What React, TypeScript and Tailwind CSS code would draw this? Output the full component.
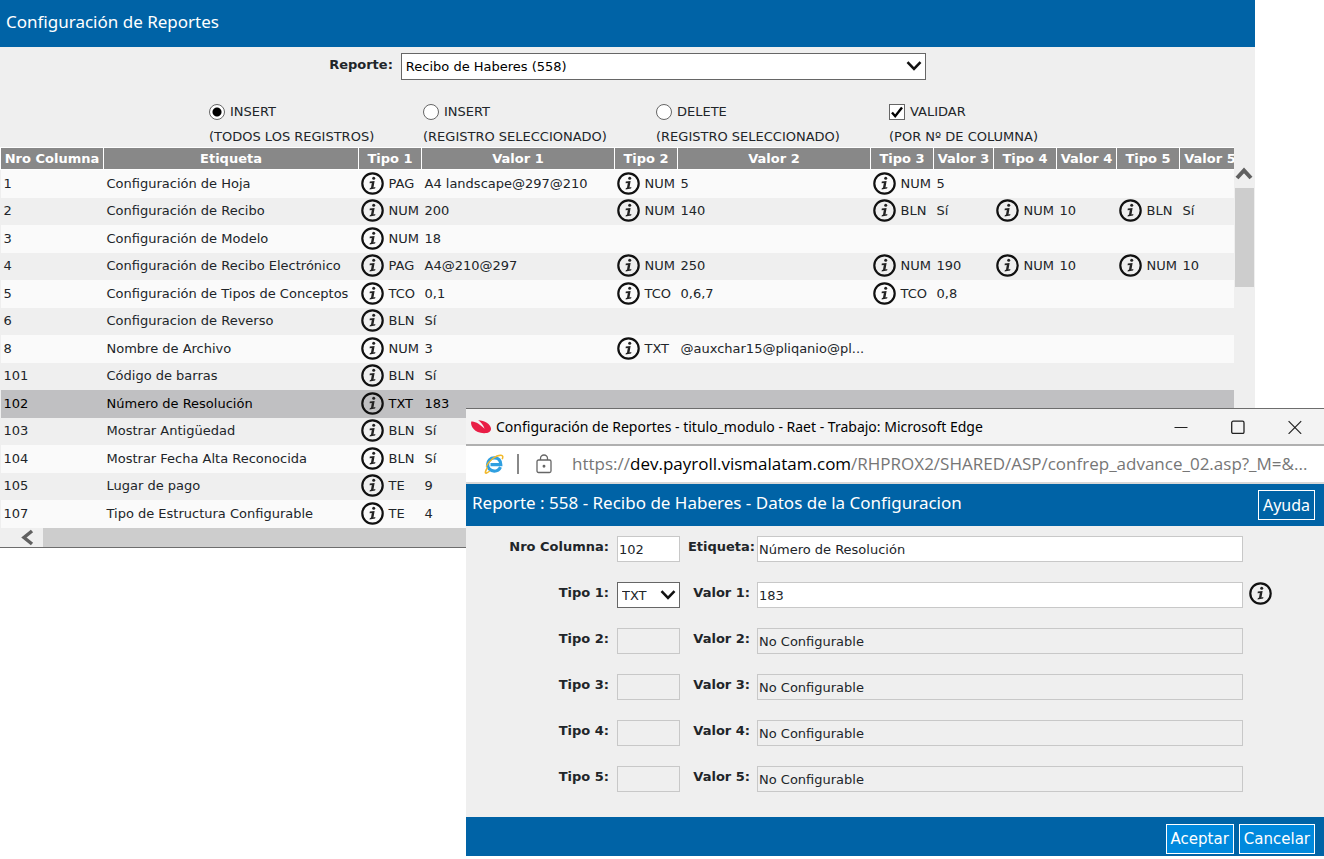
import { useState } from "react";

type Field = [tipo: string, valor: string];

type Row = {
  nro: number;
  etiqueta: string;
  fields: Field[];
};

const rows: Row[] = [
  {
    nro: 1,
    etiqueta: "Configuración de Hoja",
    fields: [["PAG", "A4 landscape@297@210"], ["NUM", "5"], ["NUM", "5"]],
  },
  {
    nro: 2,
    etiqueta: "Configuración de Recibo",
    fields: [["NUM", "200"], ["NUM", "140"], ["BLN", "Sí"], ["NUM", "10"], ["BLN", "Sí"]],
  },
  { nro: 3, etiqueta: "Configuración de Modelo", fields: [["NUM", "18"]] },
  {
    nro: 4,
    etiqueta: "Configuración de Recibo Electrónico",
    fields: [["PAG", "A4@210@297"], ["NUM", "250"], ["NUM", "190"], ["NUM", "10"], ["NUM", "10"]],
  },
  {
    nro: 5,
    etiqueta: "Configuración de Tipos de Conceptos",
    fields: [["TCO", "0,1"], ["TCO", "0,6,7"], ["TCO", "0,8"]],
  },
  { nro: 6, etiqueta: "Configuracion de Reverso", fields: [["BLN", "Sí"]] },
  {
    nro: 8,
    etiqueta: "Nombre de Archivo",
    fields: [["NUM", "3"], ["TXT", "@auxchar15@pliqanio@pl..."]],
  },
  { nro: 101, etiqueta: "Código de barras", fields: [["BLN", "Sí"]] },
  { nro: 102, etiqueta: "Número de Resolución", fields: [["TXT", "183"]] },
  { nro: 103, etiqueta: "Mostrar Antigüedad", fields: [["BLN", "Sí"]] },
  { nro: 104, etiqueta: "Mostrar Fecha Alta Reconocida", fields: [["BLN", "Sí"]] },
  { nro: 105, etiqueta: "Lugar de pago", fields: [["TE", "9"]] },
  { nro: 107, etiqueta: "Tipo de Estructura Configurable", fields: [["TE", "4"]] },
];

const modes = [
  { id: "all", title: "INSERT", note: "(TODOS LOS REGISTROS)" },
  { id: "insert", title: "INSERT", note: "(REGISTRO SELECCIONADO)" },
  { id: "delete", title: "DELETE", note: "(REGISTRO SELECCIONADO)" },
];

const InfoIcon = () => (
  <svg viewBox="0 0 24 24" className="size-6 shrink-0">
    <circle cx="11.500" cy="11.500" r="10.200" fill="none" stroke="#111" strokeWidth="2.200" />
    <circle cx="12.700" cy="6.300" r="1.500" fill="#222" />
    <path d="M8.800 9.500 13.600 9 12.500 15.500l1.900-.4-.3 1.500-5.500.9.300-1.500 1.100-.3.800-4.600-2.200.2z" fill="#222" />
  </svg>
);

const Chevron = () => (
  <svg
    viewBox="0 0 16 10"
    className="pointer-events-none absolute top-2 right-1 h-[10px] w-4"
  >
    <path d="M1.500 1.200 8 7.800l6.500-6.600" fill="none" stroke="#111" strokeWidth="2.600" />
  </svg>
);

const ReportTable = () => (
  <table className="w-[1240px] table-fixed border-collapse">
    <colgroup>
      <col className="w-[103px]" />
      <col className="w-[255px]" />
      <col className="w-[63px]" />
      <col className="w-[193px]" />
      <col className="w-[63px]" />
      <col className="w-[193px]" />
      <col className="w-[63px]" />
      <col className="w-[60px]" />
      <col className="w-[63px]" />
      <col className="w-[60px]" />
      <col className="w-[63px]" />
      <col className="w-[61px]" />
    </colgroup>
    <thead>
      <tr className="h-[22px] whitespace-nowrap text-white">
        <th className="border border-white bg-[#888] p-0">Nro Columna</th>
        <th className="border border-white bg-[#888] p-0">Etiqueta</th>
        {[1, 2, 3, 4, 5].map((n) => [
          <th key={`t${n}`} className="border border-white bg-[#888] p-0">
            Tipo {n}
          </th>,
          <th key={`v${n}`} className="border border-white bg-[#888] p-0">
            Valor {n}
          </th>,
        ])}
      </tr>
    </thead>
    <tbody>
      {rows.map((row) => (
        <tr
          key={row.nro}
          className={`whitespace-nowrap odd:h-7 even:h-[27px] ${
            row.nro === 102
              ? "bg-[#c0c0c2] text-black"
              : "odd:bg-[#fafafa] even:bg-[#efefef]"
          }`}
        >
          <td className="p-0 pl-[3px]">{row.nro}</td>
          <td className="p-0 pl-[3px]">{row.etiqueta}</td>
          {[0, 1, 2, 3, 4].map((i) => {
            const field = row.fields[i];
            return [
              <td key={`t${i}`} className="p-0 pl-[2px]">
                {field && (
                  <div className="flex items-center gap-1">
                    <InfoIcon />
                    {field[0]}
                  </div>
                )}
              </td>,
              <td key={`v${i}`} className="p-0 pl-[3px]">
                {field && field[1]}
              </td>,
            ];
          })}
        </tr>
      ))}
    </tbody>
  </table>
);

const TitleBar = () => (
  <div className="flex h-9 items-center border-t border-[#6d6d6d] bg-[#f3f3f3] pl-1">
    <svg viewBox="0 0 22 16" className="mr-1 h-4 w-[22px]">
      <path
        d="M1.200 2.600C.2 7.500 4.500 14 14 14.200c4.500.1 7.200-1.700 7-4.700C20.700 5.300 14.500 1.200 8.200 1.200c2.500 1.400 5.200 4.800 6.400 8.500C10.800 5.800 4.500 1.600 1.200 2.600z"
        fill="#e91e46"
      />
    </svg>
    <span className="font-['Noto_Sans',sans-serif] text-sm text-black">
      Configuración de Reportes - titulo_modulo - Raet - Trabajo: Microsoft Edge
    </span>
    <div className="ml-auto flex gap-[43px] pr-[22px] text-[#222]">
      <button aria-label="Minimizar">
        <svg viewBox="0 0 14 14" className="size-[14px]" fill="none" stroke="currentColor">
          <path d="M.5 7.500h13" />
        </svg>
      </button>
      <button aria-label="Maximizar">
        <svg viewBox="0 0 14 14" className="size-[14px]" fill="none" stroke="currentColor">
          <rect x=".7" y="1.200" width="12.300" height="12.300" rx="1.500" strokeWidth="1.300" />
        </svg>
      </button>
      <button aria-label="Cerrar">
        <svg viewBox="0 0 14 14" className="size-[14px]" fill="none" stroke="currentColor">
          <path d="m.6 1.200 12.600 12.600M13.200 1.200.6 13.800" strokeWidth="1.200" />
        </svg>
      </button>
    </div>
  </div>
);

const AddressBar = () => (
  <div className="flex h-10 items-center border-t-2 border-b-2 border-t-[#b0b0b0] border-b-[#d8d8d8] bg-white pl-[18px] whitespace-nowrap">
    <svg viewBox="0 0 20 20" className="size-5" fill="none">
      <path
        d="M16.500 13.200c-1.200 2.600-3.500 4-6.200 4-3.900 0-6.700-3-6.700-6.700s2.800-6.700 6.700-6.700c4 0 6.500 2.700 6.500 6.900H6.500"
        stroke="#2f9fe0"
        strokeWidth="3.200"
      />
      <path
        d="M3.500 13.500C1 17.500.7 19.800 2.500 19c1.500-.6 3.200-2 3.200-2M2.200 12.500C5 6.500 12 1 17 1.200c1.800.1 2.300 1.600 1.200 4"
        stroke="#f2b92c"
        strokeWidth="1.500"
      />
    </svg>
    <span className="ml-[13px] h-5 w-[2px] bg-[#888]" />
    <svg
      viewBox="0 0 16 20"
      className="ml-[17px] h-5 w-4"
      fill="none"
      stroke="#666"
      strokeWidth="1.300"
    >
      <rect x="1" y="6" width="14" height="12.500" rx="1.500" />
      <path d="M4.500 6V4.500a3.500 3.500 0 0 1 7 0V6" />
      <circle cx="8" cy="12.200" r=".8" fill="#666" />
    </svg>
    <span className="ml-5 font-['Open_Sans',sans-serif] text-[17px] text-[#767676]">
      https://<span className="text-black">dev.payroll.vismalatam.com</span>
      /RHPROX2/SHARED/ASP/confrep_advance_02.asp?_M=&amp;...
    </span>
  </div>
);

const inputClass =
  "h-[26px] min-w-0 rounded-none border border-[#c8c8c8] bg-white p-0 pt-px pl-px outline-none disabled:bg-[#efefef]";

const labelClass = "h-[22px] shrink-0 text-right leading-[22px] font-bold";

const Popup = () => (
  <section className="absolute top-[408px] right-0 left-[466px] bg-[#efefef]">
    <TitleBar />
    <AddressBar />
    <div className="flex h-[42px] items-center justify-between bg-[#0063a6] pr-[9px] pl-[6px] text-white">
      <h2 className="pb-1 font-['Noto_Sans',sans-serif] text-[17px]">
        Reporte : 558 - Recibo de Haberes - Datos de la Configuracion
      </h2>
      <button className="h-[30px] border border-white px-1 font-['Noto_Sans',sans-serif] text-base">
        Ayuda
      </button>
    </div>
    <form className="flex h-[291px] flex-col gap-5 pt-[10px] pr-[51px]">
      <div className="flex">
        <label htmlFor="nro" className={`${labelClass} mr-2 w-[143px]`}>
          Nro Columna:
        </label>
        <input
          id="nro"
          className={`${inputClass} w-[63px]`}
          defaultValue="102"
        />
        <label htmlFor="etiqueta" className={`${labelClass} mr-[2px] w-[75px]`}>
          Etiqueta:
        </label>
        <input
          id="etiqueta"
          className={`${inputClass} mr-[30px] flex-1`}
          defaultValue="Número de Resolución"
        />
      </div>
      {[1, 2, 3, 4, 5].map((n) => (
        <div key={n} className="flex">
          <label htmlFor={`tipo${n}`} className={`${labelClass} mr-2 w-[143px]`}>
            Tipo {n}:
          </label>
          {n === 1 ? (
            <div className="relative h-[26px] w-[63px]">
              <select
                id="tipo1"
                className="h-full w-full appearance-none border border-[#666] bg-white pt-px pl-1"
              >
                <option>TXT</option>
              </select>
              <Chevron />
            </div>
          ) : (
            <input id={`tipo${n}`} className={`${inputClass} w-[63px]`} disabled />
          )}
          <label htmlFor={`valor${n}`} className={`${labelClass} mr-[7px] w-[70px]`}>
            Valor {n}:
          </label>
          <input
            id={`valor${n}`}
            className={`${inputClass} mr-[6px] flex-1`}
            defaultValue={n === 1 ? "183" : "No Configurable"}
            disabled={n !== 1}
          />
          <div className="w-6">{n === 1 && <InfoIcon />}</div>
        </div>
      ))}
    </form>
    <div className="flex h-[39px] items-center justify-end gap-[5px] bg-[#0063a6] pt-1 pr-[9px] text-[15px] text-white">
      <button className="h-[30px] border border-white bg-[#0089dd] px-1">
        Aceptar
      </button>
      <button className="h-[30px] border border-white bg-[#0089dd] px-1">
        Cancelar
      </button>
    </div>
  </section>
);

const App = () => {
  const [mode, setMode] = useState<string>("all");
  const [validar, setValidar] = useState<boolean>(true);

  return (
    <div className="relative min-h-screen bg-white font-['DejaVu_Sans',sans-serif] text-[13px] leading-5 text-[#212529]">
      <main className="mr-[69px] border-b border-[#6d6d6d] bg-[#efefef]">
        <header className="flex h-[47px] items-center bg-[#0063a6] pb-1 pl-[6px] text-white">
          <h1 className="font-['Noto_Sans',sans-serif] text-[17px]">
            Configuración de Reportes
          </h1>
        </header>

        <div className="flex justify-center pt-[6px]">
          <label htmlFor="reporte" className="mr-2 leading-6 font-bold">
            Reporte:
          </label>
          <div className="relative mb-5 h-[27px] w-[525px]">
            <select
              id="reporte"
              className="h-full w-full appearance-none border border-[#666] bg-white pt-px pl-1 text-black"
            >
              <option>Recibo de Haberes (558)</option>
            </select>
            <Chevron />
          </div>
        </div>

        <div className="flex h-[47px] justify-center whitespace-nowrap">
          <div className="grid grid-cols-[214px_233px_233px_157px] leading-[25px]">
            {modes.map((m) => (
              <label key={m.id} className="-mt-px">
                <span className="flex items-center gap-[5px]">
                  <input
                    type="radio"
                    name="mode"
                    checked={mode === m.id}
                    onChange={() => setMode(m.id)}
                    className="size-4 appearance-none rounded-full border border-[#666] bg-white checked:bg-[radial-gradient(circle,#000_4px,#fff_5px)]"
                  />
                  {m.title}
                </span>
                {m.note}
              </label>
            ))}
            <label className="-mt-px">
              <span className="relative flex items-center gap-[5px]">
                <input
                  type="checkbox"
                  checked={validar}
                  onChange={(e) => setValidar(e.target.checked)}
                  className="peer size-4 appearance-none border border-[#666] bg-white"
                />
                <svg
                  viewBox="0 0 16 16"
                  className="pointer-events-none absolute left-0 hidden size-4 peer-checked:block"
                >
                  <path
                    d="m3 8.500 3.200 3.700L13 3.500"
                    fill="none"
                    stroke="#000"
                    strokeWidth="2.400"
                  />
                </svg>
                VALIDAR
              </span>
              (POR Nº DE COLUMNA)
            </label>
          </div>
        </div>

        <div className="flex">
          <div className="min-w-0 flex-1 overflow-hidden">
            <ReportTable />
          </div>
          <div className="w-[21px] px-px pt-5">
            <svg viewBox="0 0 18 21" className="h-[21px] w-[18px]">
              <path d="M2 11 9 3.500 16 11" fill="none" stroke="#606060" strokeWidth="4" />
            </svg>
            <div className="h-[99px] bg-[#cdcdcd]" />
          </div>
        </div>

        <div className="flex h-[19px] items-center">
          <svg viewBox="0 0 43 19" className="w-[43px]">
            <path d="m32 3-8 6.500 8 6.500" fill="none" stroke="#606060" strokeWidth="3.500" />
          </svg>
          <div className="h-full flex-1 bg-[#cdcdcd]" />
        </div>
      </main>

      <Popup />
    </div>
  );
};

export default App;
